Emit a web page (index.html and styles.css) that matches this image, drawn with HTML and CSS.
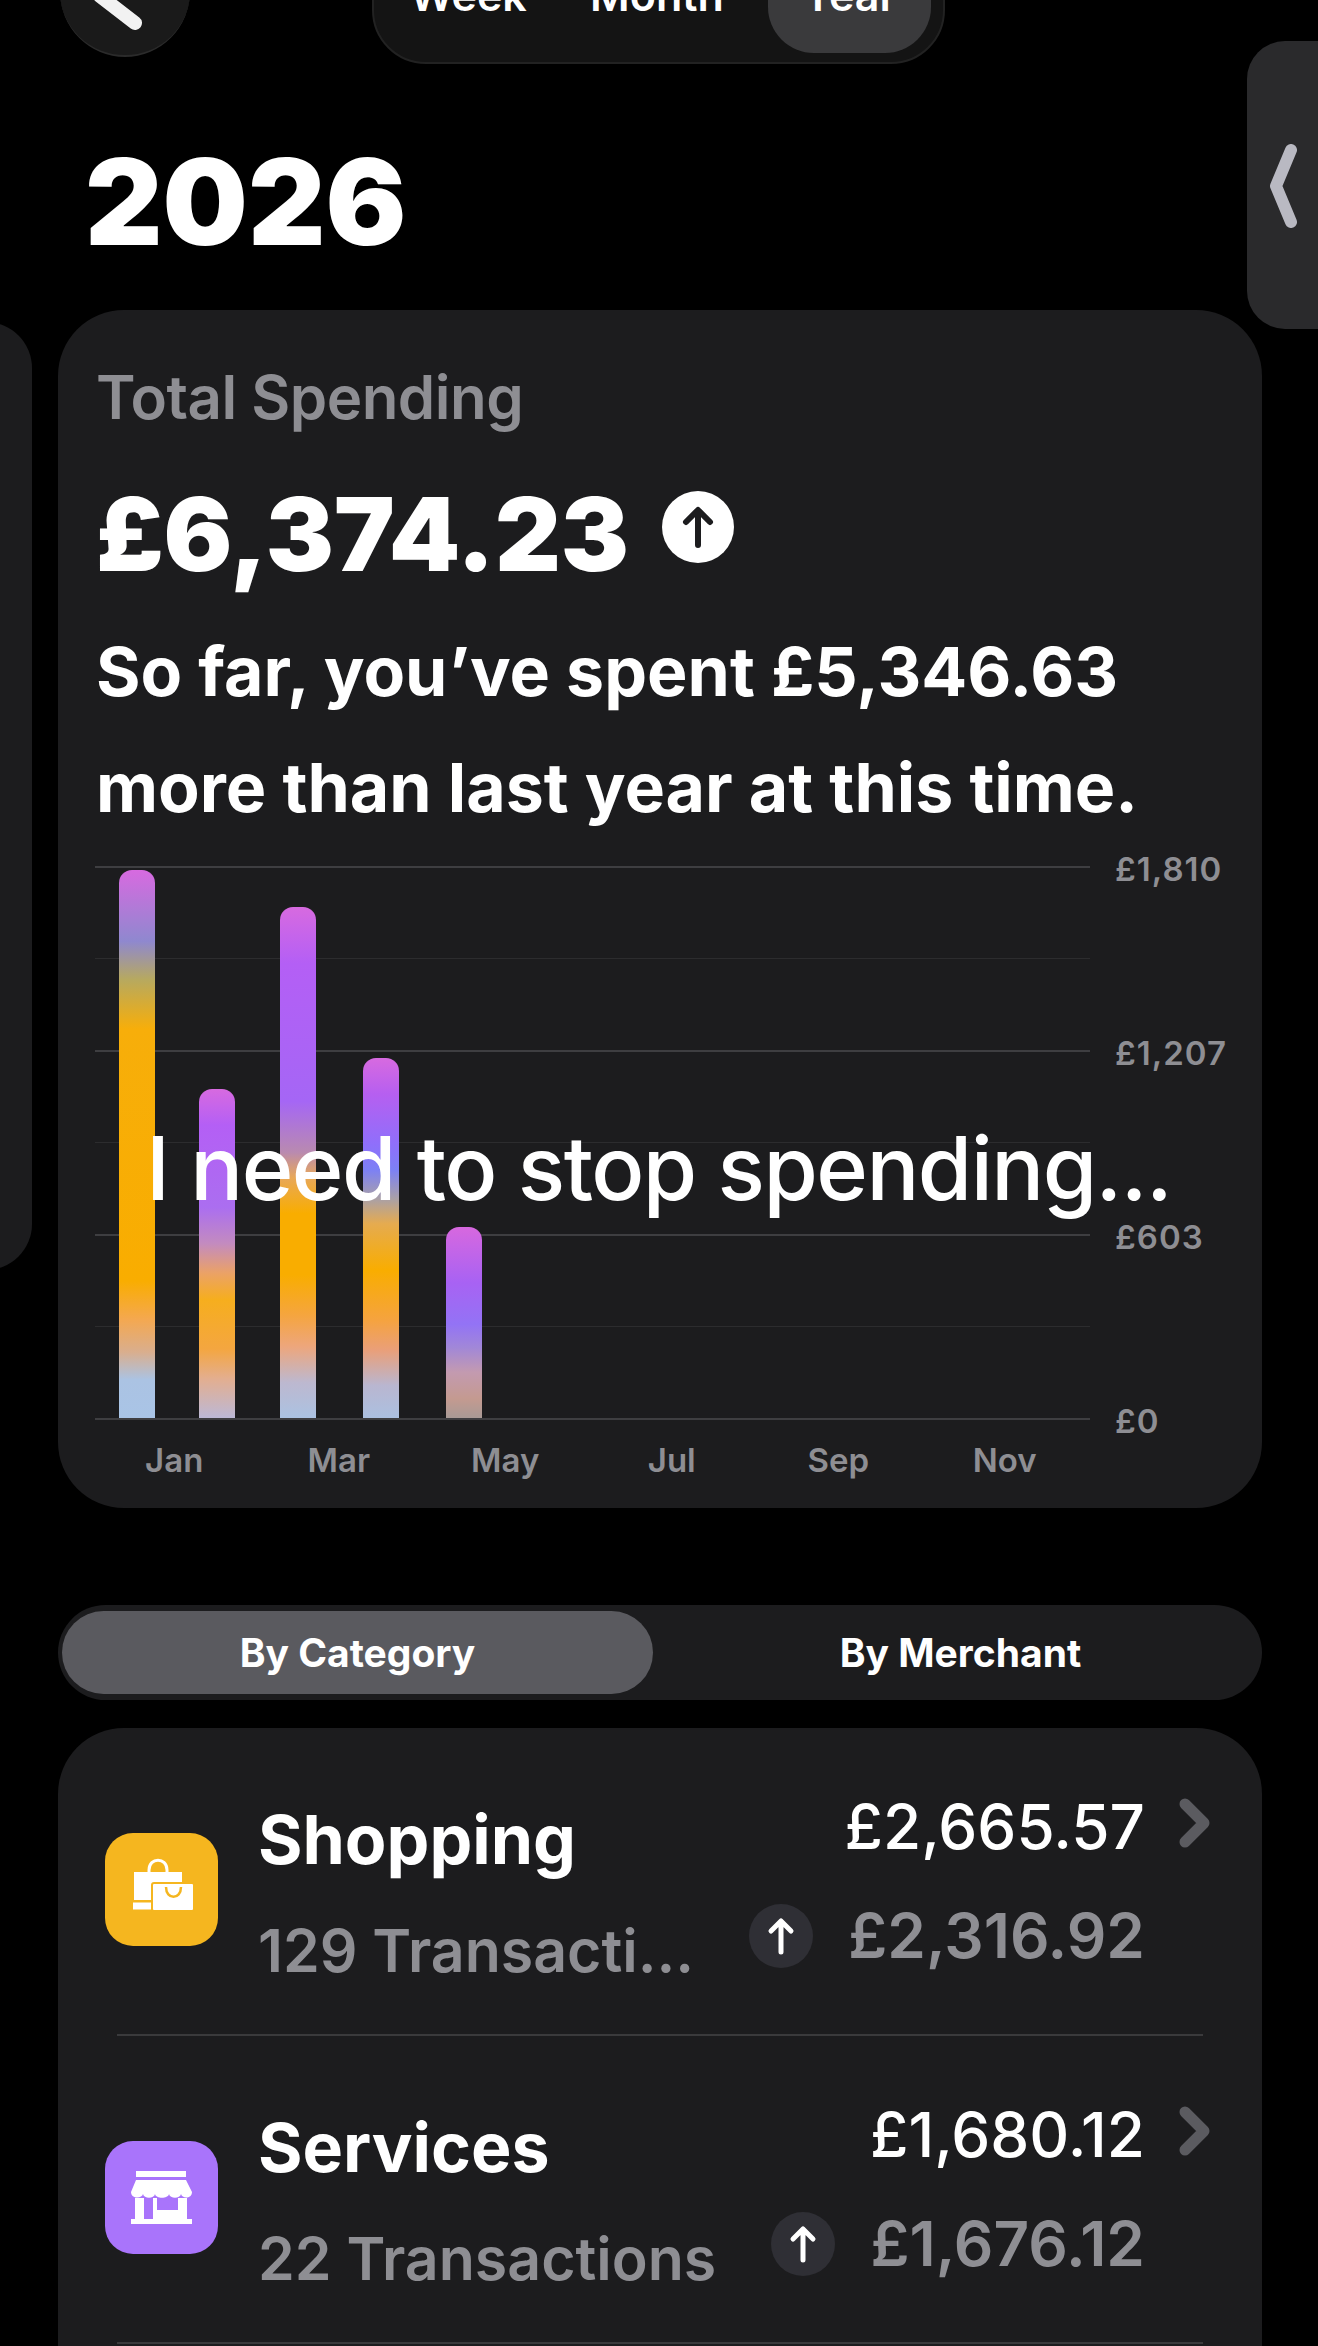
FILE: index.html
```html
<!DOCTYPE html>
<html lang="en">
<head>
    <meta charset="UTF-8">
    <meta name="viewport" content="width=device-width, initial-scale=1.0">
    <title>Spending</title>
    <link rel="stylesheet" href="styles.css">
</head>
<body>
    <!-- neighbouring pages peeking in from the sides -->
    <div class="peek-left"></div>
    <div class="peek-right">
        <svg width="30" height="84" viewBox="0 0 30 84"><path d="M23 6 L8 42 L23 78" fill="none" stroke="#b9b9c2" stroke-width="12" stroke-linecap="round" stroke-linejoin="round"/></svg>
    </div>

    <header class="top">
        <button class="back">
            <svg width="130" height="130" viewBox="0 0 130 130"><path d="M40 70 L75 97" fill="none" stroke="#f2f2f2" stroke-width="14" stroke-linecap="round"/></svg>
        </button>
        <div class="range">
            <span class="range-item">Week</span>
            <span class="range-item">Month</span>
            <span class="range-item active">Year</span>
        </div>
    </header>

    <h1 class="year">2026</h1>

    <section class="card total">
        <p class="total-label">Total Spending</p>
        <div class="total-row">
            <span class="total-amount">£6,374.23</span>
            <svg class="total-icon" width="72" height="72" viewBox="0 0 72 72"><circle cx="36" cy="36" r="36" fill="#fff"/><path d="M36 54 V20 M24 31 L36 19 L48 31" fill="none" stroke="#1c1c1e" stroke-width="6" stroke-linecap="round" stroke-linejoin="round"/></svg>
        </div>
        <p class="total-note">So far, you’ve spent £5,346.63<br>more than last year at this time.</p>

        <div class="chart">
            <div class="plot">
                <div class="line major"></div>
                <div class="line"></div>
                <div class="line major"></div>
                <div class="line"></div>
                <div class="line major"></div>
                <div class="line"></div>
                <div class="line major last"></div>
                <div class="bars">
                    <div class="bar bar-jan" style="height:548px"></div>
                    <div class="bar bar-feb" style="height:329px"></div>
                    <div class="bar bar-mar" style="height:511px"></div>
                    <div class="bar bar-apr" style="height:360px"></div>
                    <div class="bar bar-may" style="height:191px"></div>
                </div>
            </div>
            <div class="y-labels">
                <span>£1,810</span>
                <span>£1,207</span>
                <span>£603</span>
                <span>£0</span>
            </div>
        </div>
        <div class="x-labels">
            <span>Jan</span>
            <span>Mar</span>
            <span>May</span>
            <span>Jul</span>
            <span>Sep</span>
            <span>Nov</span>
        </div>
        <p class="caption">I need to stop spending...</p>
    </section>

    <div class="tabs">
        <span class="tab active">By Category</span>
        <span class="tab">By Merchant</span>
    </div>

    <section class="card list">
        <div class="row">
            <div class="tile tile-yellow">
                <svg width="113" height="113" viewBox="0 0 113 113">
                    <path d="M44 40 V37 C44 24 62 24 62 37 V40" fill="none" stroke="#fff" stroke-width="3"/>
                    <rect x="29" y="39" width="48" height="28" fill="#fff"/>
                    <rect x="28" y="69.5" width="18" height="7" fill="#fff"/>
                    <rect x="47" y="50" width="42" height="28" rx="2" fill="#fff" stroke="#f5b61f" stroke-width="2"/>
                    <path d="M61 54 C61 67 76 67 76 54" fill="none" stroke="#f5b61f" stroke-width="2.5"/>
                </svg>
            </div>
            <div class="names">
                <span class="name">Shopping</span>
                <span class="count">129 Transacti...</span>
            </div>
            <div class="amounts">
                <div class="amount-line">
                    <span class="amount">£2,665.57</span>
                    <svg class="chev" width="32" height="50" viewBox="0 0 32 50"><path d="M6 6 L25 25 L6 44" fill="none" stroke="#5b5b60" stroke-width="11" stroke-linecap="round" stroke-linejoin="round"/></svg>
                </div>
                <div class="amount-line">
                    <span class="up"><svg width="30" height="38" viewBox="0 0 30 38"><path d="M15 35 V4 M5 14 L15 4 L25 14" fill="none" stroke="#fff" stroke-width="5" stroke-linecap="round" stroke-linejoin="round"/></svg></span>
                    <span class="amount diff">£2,316.92</span>
                    <span class="chev-space"></span>
                </div>
            </div>
        </div>
        <div class="row">
            <div class="tile tile-purple">
                <svg width="113" height="113" viewBox="0 0 113 113">
                    <rect x="31" y="30" width="50" height="6" fill="#fff"/>
                    <path d="M31 39 H81 L87 51 C87 58 77 58 76 53 C75 58 65 58 64 53 C63 58 51 58 50 53 C49 58 39 58 38 53 C37 58 26 58 26 51 Z" fill="#fff"/>
                    <rect x="30" y="57" width="9" height="22" fill="#fff"/>
                    <path d="M48 57 H52 V69 H73 V57 H82 V79 H48 Z" fill="#fff"/>
                    <rect x="26" y="78" width="61" height="5" fill="#fff"/>
                </svg>
            </div>
            <div class="names">
                <span class="name">Services</span>
                <span class="count">22 Transactions</span>
            </div>
            <div class="amounts">
                <div class="amount-line">
                    <span class="amount">£1,680.12</span>
                    <svg class="chev" width="32" height="50" viewBox="0 0 32 50"><path d="M6 6 L25 25 L6 44" fill="none" stroke="#5b5b60" stroke-width="11" stroke-linecap="round" stroke-linejoin="round"/></svg>
                </div>
                <div class="amount-line">
                    <span class="up"><svg width="30" height="38" viewBox="0 0 30 38"><path d="M15 35 V4 M5 14 L15 4 L25 14" fill="none" stroke="#fff" stroke-width="5" stroke-linecap="round" stroke-linejoin="round"/></svg></span>
                    <span class="amount diff">£1,676.12</span>
                    <span class="chev-space"></span>
                </div>
            </div>
        </div>
    </section>
</body>
</html>
```

FILE: styles.css
```css
*{
    margin: 0;
    padding: 0;
    box-sizing: border-box;
}
body{
    position: relative;
    width: 1318px;
    height: 2346px;
    overflow: hidden;
    background-color: #000;
    color: #fff;
    font-family: Inter, "Liberation Sans", sans-serif;
}

/* side pages */
.peek-left{
    position: absolute;
    left: -60px;
    top: 322px;
    width: 92px;
    height: 948px;
    border-radius: 50px;
    background-color: #1c1c1e;
}
.peek-right{
    position: absolute;
    left: 1247px;
    top: 41px;
    width: 120px;
    height: 288px;
    padding: 103px 0 0 21px;
    border-radius: 38px;
    background-color: #2a2a2c;
}

/* top bar, cut by the top of the screen */
.top{
    display: flex;
    height: 138px;
    margin-top: -74px;
    padding-left: 60px;
}
.back{
    width: 130px;
    height: 131px;
    border: none;
    border-bottom: 2px solid #2b2b2b;
    border-radius: 50%;
    background-color: #1a1a1a;
}
.back svg{
    display: block;
}
.range{
    display: flex;
    align-items: center;
    width: 573px;
    height: 138px;
    margin-left: 182px;
    padding: 11px 12px 9px 0;
    border: 2px solid #222;
    border-radius: 54px;
    background-color: #141414;
}
.range-item{
    width: 190px;
    height: 100%;
    font-size: 43px;
    font-weight: 600;
    line-height: 112px;
    text-align: center;
}
.range-item.active{
    width: 164px;
    margin-left: 17px;
    border-radius: 46px;
    background-color: #3a3a3c;
}

.year{
    height: 246px;
    padding: 73px 0 0 85px;
    font-size: 120px;
    font-weight: 900;
    line-height: 130px;
}

.card{
    position: relative;
    width: 1204px;
    margin-left: 58px;
    border-radius: 66px;
    background-color: #1c1c1e;
}

/* total card */
.total{
    height: 1198px;
    padding: 52px 0 0 38px;
}
.total-label{
    height: 70px;
    color: #8e8e93;
    font-size: 60px;
    font-weight: 600;
    letter-spacing: -0.5px;
    line-height: 70px;
}
.total-row{
    display: flex;
    align-items: center;
    gap: 33px;
    height: 130px;
    margin-top: 37px;
}
.total-amount{
    font-size: 102px;
    font-weight: 900;
    line-height: 130px;
}
.total-icon{
    margin-bottom: 14px;
}
.total-note{
    margin-top: 14px;
    font-size: 68px;
    font-weight: 700;
    line-height: 116px;
}

.chart{
    display: flex;
    margin: 21px 0 0 -1px;
}
.plot{
    position: relative;
    width: 995px;
    height: 553px;
    margin-right: 25px;
}
.line{
    height: 92px;
    border-top: 1px solid #2c2c2e;
}
.line.major{
    border-top: 2px solid #3e3e41;
}
.line.last{
    height: 2px;
}
.bars{
    position: absolute;
    left: 0;
    right: 0;
    bottom: 1px;
    display: flex;
    align-items: flex-end;
}
.bar{
    width: 36px;
    border-radius: 13px 13px 0 0;
}
.bar-jan{
    margin-left: 24px;
    background: linear-gradient(#d76ae0 0%, #8f88cf 13%, #b7a95f 20%, #f7ae0a 29%, #f9ad00 75%, #f4a850 82%, #d9ae8e 88%, #abc3e3 93%, #a9c4e6 100%);
}
.bar-feb{
    margin-left: 44px;
    background: linear-gradient(#d76ae0 0%, #b45ff5 11%, #ab6ef0 36%, #c38bbf 47%, #eba266 56%, #f6ae1e 64%, #f4a640 79%, #e3ae8f 88%, #bcb8d6 100%);
}
.bar-mar{
    margin-left: 45px;
    background: linear-gradient(#d76ae0 0%, #b45ff5 11%, #a566f5 38%, #b98ab0 48%, #e8a858 53%, #f9ad00 60%, #f9ad00 72%, #f5a540 80%, #eda67c 86%, #bdb8cf 93%, #abc2e2 100%);
}
.bar-apr{
    margin-left: 47px;
    background: linear-gradient(#d76ae0 0%, #b65ff0 10%, #8f6ffb 24%, #7c80f5 31%, #a9a0a8 39%, #e5ab50 46%, #f9ad00 59%, #f5a340 73%, #ea9f78 81%, #b9b6d0 91%, #abc0e0 100%);
}
.bar-may{
    margin-left: 47px;
    background: linear-gradient(#d768df 0%, #a862f3 29%, #9373f5 51%, #a187d8 63%, #c39ab0 76%, #c49a90 90%, #a89a96 100%);
}
.y-labels{
    display: flex;
    flex-direction: column;
    gap: 148px;
    margin-top: -15px;
    color: #8e8e93;
    font-size: 33px;
    font-weight: 600;
    letter-spacing: 1px;
    line-height: 36px;
}
.x-labels{
    display: grid;
    grid-template-columns: repeat(6, 166.5px);
    margin: 3px 0 0 -7px;
    color: #8e8e93;
    font-size: 33px;
    font-weight: 600;
    line-height: 36px;
    text-align: center;
}
.x-labels span:first-child{
    padding-left: 4px;
}
.caption{
    position: absolute;
    left: 88px;
    top: 804px;
    font-size: 88px;
    font-weight: 500;
    letter-spacing: -1.55px;
    line-height: 108px;
    white-space: nowrap;
}

/* by category / by merchant */
.tabs{
    display: flex;
    width: 1204px;
    height: 95px;
    margin: 97px 0 28px 58px;
    padding: 6px 4px;
    border-radius: 48px;
    background-color: #1c1c1e;
}
.tab{
    flex: 1;
    padding-left: 10px;
    font-size: 39px;
    font-weight: 700;
    line-height: 84px;
    text-align: center;
}
.tab.active{
    flex: 0 0 591px;
    padding-left: 0;
    border-radius: 42px;
    background-color: #5a5a5f;
}

/* category list */
.list{
    height: 700px;
    padding: 0 47px;
}
.row{
    display: flex;
    height: 308px;
    margin: 0 12px;
    padding-top: 105px;
    border-bottom: 2px solid #3a3a3c;
}
.tile{
    flex: none;
    width: 113px;
    height: 113px;
    margin-left: -12px;
    border-radius: 28px;
}
.tile svg{
    display: block;
}
.tile-yellow{
    background-color: #f5b61f;
}
.tile-purple{
    background-color: #a974fb;
}
.names{
    display: flex;
    flex-direction: column;
    flex: 1;
    margin: -48px 0 0 40px;
    line-height: 108px;
}
.name{
    margin-bottom: 4px;
    font-size: 68px;
    font-weight: 700;
}
.count{
    color: #8e8e93;
    font-size: 59px;
    font-weight: 600;
}
.amounts{
    display: flex;
    flex-direction: column;
    margin: -61px -8px 0 0;
}
.amount-line{
    display: flex;
    justify-content: flex-end;
    align-items: center;
    height: 109px;
}
.amount{
    font-size: 62px;
    font-weight: 500;
}
.diff{
    color: #8e8e93;
    font-weight: 600;
}
.chev{
    margin: -8px 0 0 34px;
}
.chev-space{
    width: 66px;
}
.up{
    display: flex;
    justify-content: center;
    align-items: center;
    width: 64px;
    height: 64px;
    margin-right: 35px;
    border-radius: 50%;
    background-color: #2f2f35;
}
```
